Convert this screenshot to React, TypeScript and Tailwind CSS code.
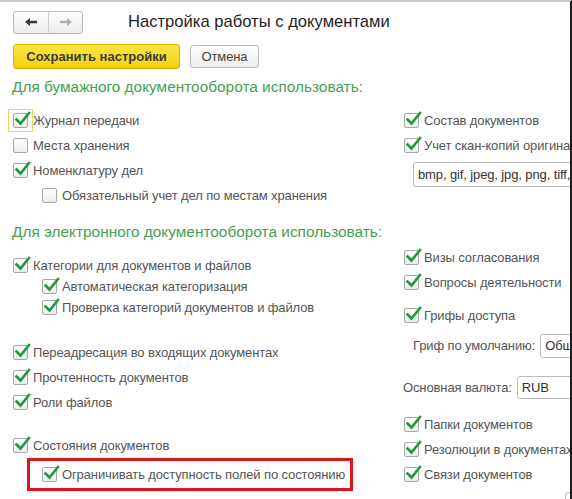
import React from 'react'

function CheckBox({ checked = true, focus = false }: { checked?: boolean; focus?: boolean }) {
  return (
    <span className="relative shrink-0 w-[15px] h-[15px]">
      {focus && (
        <span className="absolute left-[-5px] top-[-4px] w-[25px] h-[23px] border border-[#f2d36a]" />
      )}
      <span className="absolute inset-0 rounded-[2px] border border-[#a8a8a8] bg-linear-to-b from-white to-[#ececec]" />
      {checked && (
        <svg className="absolute left-[1px] top-[-3px]" width="17" height="17" viewBox="0 0 17 17">
          <path d="M2.5 9.5 L6.5 13.5 L15 3" stroke="#1f9a3a" strokeWidth="2.6" fill="none" strokeLinecap="square" />
        </svg>
      )}
    </span>
  )
}

function Row({
  label,
  checked = true,
  indent = false,
  focus = false,
  h = 'h-[25px]',
}: {
  label: string
  checked?: boolean
  indent?: boolean
  focus?: boolean
  h?: string
}) {
  return (
    <div className={`flex items-center gap-[5px] whitespace-nowrap ${h} ${indent ? 'pl-[30px]' : 'pl-[1px]'}`}>
      <CheckBox checked={checked} focus={focus} />
      <span>{label}</span>
    </div>
  )
}

function Field({ value, className }: { value: string; className: string }) {
  return (
    <div
      className={`flex items-center shrink-0 overflow-hidden whitespace-nowrap rounded-[3px] border border-[#bdbdbd] bg-white px-[4px] text-[#333] ${className}`}
    >
      {value}
    </div>
  )
}

export default function App() {
  return (
    <div className="w-[572px] h-[499px] overflow-hidden bg-white border-t-2 border-t-[#c8c8c8] border-r-2 border-r-[#1a1a1a] font-['Liberation_Sans',Arial,sans-serif] text-[13px] tracking-[-0.12px] text-[#555]">
      {/* Header */}
      <div className="flex items-center pl-[13px] pt-[8px]">
        <div className="flex h-[23px] w-[70px] rounded-[3px] border border-[#b8b8b8] bg-linear-to-b from-white to-[#ebebeb]">
          <div className="flex w-[35px] items-center justify-center border-r border-[#d0d0d0]">
            <svg width="14" height="10" viewBox="0 0 14 10">
              <path d="M1 5 L6 1 L6 3.8 L13 3.8 L13 6.2 L6 6.2 L6 9 Z" fill="#3a3a3a" />
            </svg>
          </div>
          <div className="flex flex-1 items-center justify-center">
            <svg width="14" height="10" viewBox="0 0 14 10">
              <path d="M13 5 L8 1 L8 3.8 L1 3.8 L1 6.2 L8 6.2 L8 9 Z" fill="#b0b0b0" />
            </svg>
          </div>
        </div>
        <div className="ml-[45px] text-[16.6px] tracking-normal text-[#1f1f1f]">Настройка работы с документами</div>
      </div>

      {/* Command bar */}
      <div className="flex items-center gap-[10px] pl-[13px] mt-[9px]">
        <button className="h-[25px] w-[167px] rounded-[3px] border border-[#d4b300] bg-linear-to-b from-[#fbe641] to-[#f2d200] font-bold tracking-normal text-[#3b3b3b]">
          Сохранить настройки
        </button>
        <button className="h-[23px] w-[69px] rounded-[3px] border border-[#bcbcbc] bg-linear-to-b from-white to-[#ececec] text-[#444]">
          Отмена
        </button>
      </div>

      <div className="mt-[6px] h-[24px] pl-[12px] flex items-center text-[15.4px] tracking-normal text-[#45a152]">
        Для бумажного документооборота использовать:
      </div>

      <div className="flex">
        {/* Left column */}
        <div className="w-[403px] shrink-0 pl-[12px] pt-[9px]">
          <Row label="Журнал передачи" focus />
          <Row label="Места хранения" checked={false} />
          <Row label="Номенклатуру дел" />
          <Row label="Обязательный учет дел по местам хранения" checked={false} indent />

          <div className="mt-[12px] h-[24px] flex items-center text-[15.4px] tracking-normal text-[#45a152] whitespace-nowrap">
            Для электронного документооборота использовать:
          </div>

          <div className="mt-[11px]">
            <Row label="Категории для документов и файлов" h="h-[21px]" />
            <Row label="Автоматическая категоризация" indent h="h-[21px]" />
            <Row label="Проверка категорий документов и файлов" indent h="h-[21px]" />
          </div>

          <div className="mt-[22px]">
            <Row label="Переадресация во входящих документах" />
            <Row label="Прочтенность документов" />
            <Row label="Роли файлов" />
          </div>

          <div className="mt-[20px]">
            <Row label="Состояния документов" h="h-[22px]" />
          </div>
          <div className="mt-[1px] ml-[15px] flex h-[33px] w-[326px] items-center border-[3px] border-[#e0141c] pl-[11px]">
            <Row label="Ограничивать доступность полей по состоянию" />
          </div>
        </div>

        {/* Right column */}
        <div className="min-w-0 flex-1 pt-[9px]">
          <Row label="Состав документов" />
          <Row label="Учет скан-копий оригиналов" />
          <Field value="bmp, gif, jpeg, jpg, png, tiff, tif, wmf" className="mt-[4px] ml-[10px] h-[25px] w-[200px]" />

          <div className="mt-[58px]">
            <Row label="Визы согласования" />
            <Row label="Вопросы деятельности" />
          </div>
          <div className="mt-[8px]">
            <Row label="Грифы доступа" />
          </div>
          <div className="mt-[6px] flex h-[24px] items-center pl-[10px] whitespace-nowrap">
            <span>Гриф по умолчанию:</span>
            <Field value="Общий" className="ml-[5px] h-[24px] w-[100px]" />
          </div>
          <div className="mt-[18px] flex h-[23px] items-center whitespace-nowrap">
            <span>Основная валюта:</span>
            <Field value="RUB" className="ml-[5px] h-[23px] w-[100px]" />
          </div>

          <div className="mt-[13px]">
            <Row label="Папки документов" />
            <Row label="Резолюции в документах" />
            <Row label="Связи документов" />
          </div>
          <div className="mt-[5px] ml-[162px] h-[20px] w-[60px] rounded-[3px] border border-[#bdbdbd]" />
        </div>
      </div>
    </div>
  )
}
